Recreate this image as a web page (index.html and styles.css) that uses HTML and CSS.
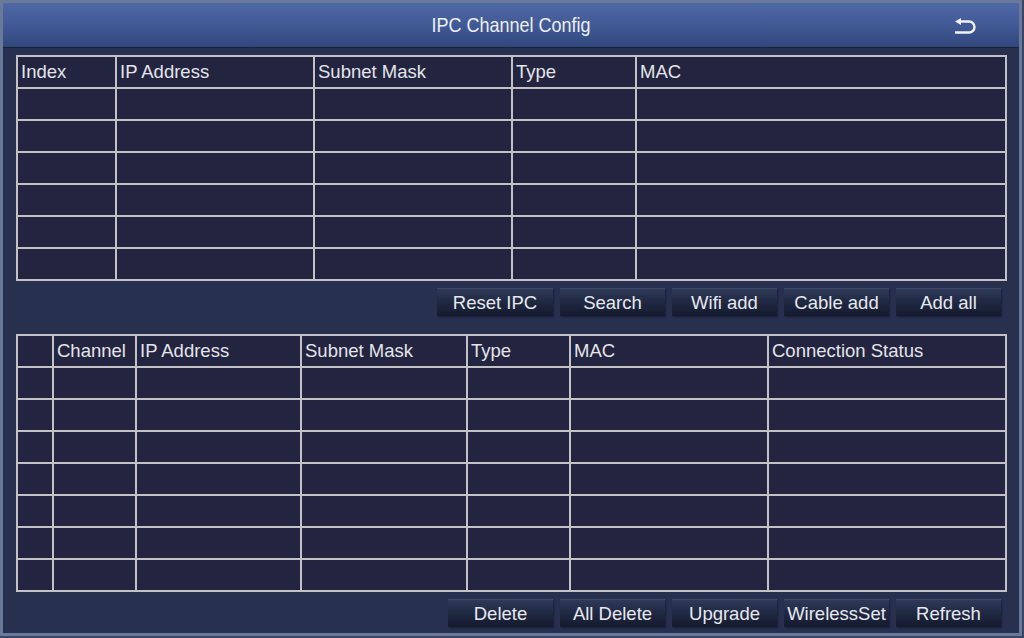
FILE: index.html
```html
<!DOCTYPE html>
<html lang="en">
<head>
  <meta charset="UTF-8" />
  <title>IPC Channel Config</title>
  <link rel="stylesheet" href="styles.css">
</head>
<body>
  <div class="frame">
    <header class="titlebar">
      <span class="title">IPC Channel Config</span>
      <button class="back" title="Back">
        <svg width="26" height="18" viewBox="0 0 26 18">
          <path d="M8 3.5 H17 A5.5 5.5 0 0 1 17 14.5 H3" fill="none" stroke="#f0f2f8" stroke-width="2.4" />
          <path d="M3 3.5 L9 0 L9 7 Z" fill="#f0f2f8" />
        </svg>
      </button>
    </header>

    <div class="content">
      <table class="grid search-list">
        <colgroup>
          <col style="width:99px"><col style="width:198px"><col style="width:198px"><col style="width:124px"><col>
        </colgroup>
        <thead>
          <tr><th>Index</th><th>IP Address</th><th>Subnet Mask</th><th>Type</th><th>MAC</th></tr>
        </thead>
        <tbody id="searchRows"></tbody>
      </table>

      <div class="actions">
        <button class="btn wide">Reset IPC</button>
        <button class="btn">Search</button>
        <button class="btn">Wifi add</button>
        <button class="btn">Cable add</button>
        <button class="btn">Add all</button>
      </div>

      <table class="grid channel-list">
        <colgroup>
          <col style="width:36px"><col style="width:83px"><col style="width:165px"><col style="width:166px"><col style="width:103px"><col style="width:198px"><col>
        </colgroup>
        <thead>
          <tr><th></th><th>Channel</th><th>IP Address</th><th>Subnet Mask</th><th>Type</th><th>MAC</th><th>Connection Status</th></tr>
        </thead>
        <tbody id="channelRows"></tbody>
      </table>

      <div class="actions">
        <button class="btn">Delete</button>
        <button class="btn">All Delete</button>
        <button class="btn">Upgrade</button>
        <button class="btn">WirelessSet</button>
        <button class="btn">Refresh</button>
      </div>
    </div>
  </div>

  <script>
    function fillRows(id, rows, cols) {
      const body = document.getElementById(id);
      for (let r = 0; r < rows; r++) {
        const tr = document.createElement('tr');
        for (let c = 0; c < cols; c++) {
          tr.appendChild(document.createElement('td'));
        }
        body.appendChild(tr);
      }
    }
    fillRows('searchRows', 6, 5);
    fillRows('channelRows', 7, 7);
  </script>
</body>
</html>
```

FILE: styles.css
```css
html, body {
  margin: 0;
  padding: 0;
  background: #3a4566;
}

body {
  font-family: 'Liberation Sans', Arial, sans-serif;
  color: #e2e4ea;
  width: 1024px;
  height: 638px;
  overflow: hidden;
}

.frame {
  width: 1022px;
  height: 636px;
  box-sizing: border-box;
  border: 3px solid #6a7899;
  background: #283050;
  display: flex;
  flex-direction: column;
}

.titlebar {
  height: 44px;
  flex: none;
  position: relative;
  display: flex;
  align-items: center;
  justify-content: center;
  background: linear-gradient(to bottom, #4e67a5 0%, #435c98 45%, #31487d 100%);
  border-bottom: 1px solid #1b2238;
}

.title {
  font-size: 18px;
  color: #eceef4;
  transform: scaleY(1.1);
}

.back {
  position: absolute;
  right: 41px;
  top: 15px;
  padding: 0;
  border: none;
  background: none;
  cursor: pointer;
}

.back svg { display: block; }

.content {
  padding: 7px 12px 0 13px;
}

.grid {
  width: 991px;
  border-collapse: collapse;
  table-layout: fixed;
  background: #23243f;
  border: 2px solid #c8c8cc;
}

.grid th, .grid td {
  border: 2px solid #c2c2c6;
  height: 30px;
  padding: 0 3px;
  text-align: left;
  font-weight: normal;
  font-size: 18.5px;
  color: #e4e4ea;
  white-space: nowrap;
  overflow: hidden;
}

.actions {
  display: flex;
  justify-content: flex-end;
  gap: 7px;
  padding-right: 6px;
  margin: 7px 0 18px;
}

.btn {
  width: 105px;
  height: 28px;
  padding: 0;
  border: none;
  border-top: 1px solid #3d4866;
  background: linear-gradient(to bottom, #2f3a58 0%, #222b46 40%, #141a2e 100%);
  color: #e6e8ee;
  font-family: 'Liberation Sans', Arial, sans-serif;
  font-size: 18.5px;
  box-shadow: 1px 1px 2px rgba(0, 0, 0, 0.35);
  cursor: pointer;
}

.btn.wide {
  width: 116px;
}
```
